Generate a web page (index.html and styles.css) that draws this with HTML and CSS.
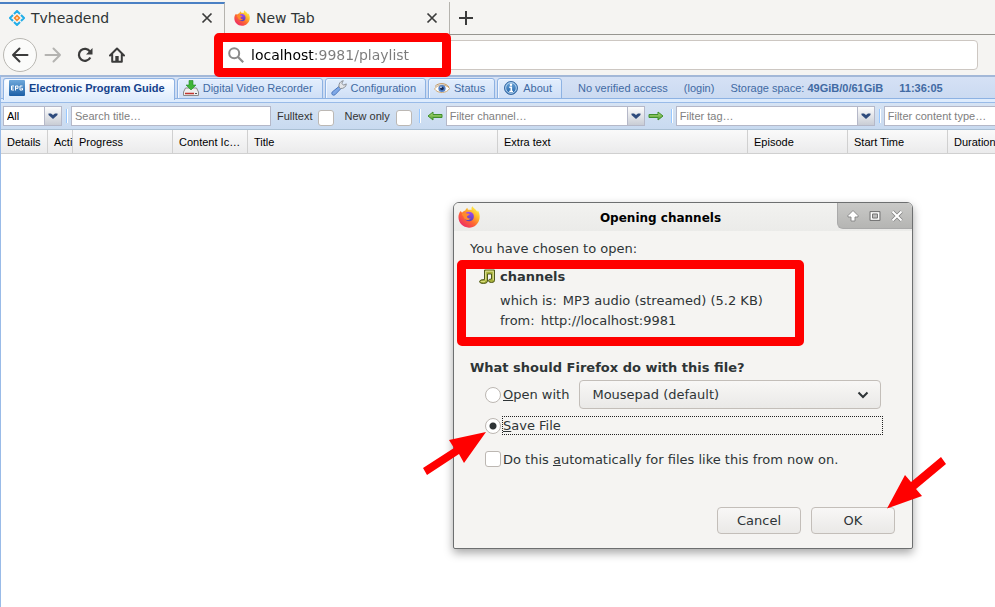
FILE: index.html
```html
<!DOCTYPE html>
<html lang="en">
<head>
<meta charset="utf-8">
<title>Tvheadend</title>
<link rel="stylesheet" href="styles.css">
</head>
<body>
<svg width="0" height="0" class="defs" aria-hidden="true">
  <defs>
    <linearGradient id="flame" x1="0.85" y1="0.1" x2="0.2" y2="0.9">
      <stop offset="0" stop-color="#fff04a"/><stop offset="0.3" stop-color="#ffb62a"/><stop offset="0.6" stop-color="#ff6a30"/><stop offset="1" stop-color="#ee2f62"/>
    </linearGradient>
    <linearGradient id="globe" x1="0" y1="0" x2="0" y2="1">
      <stop offset="0" stop-color="#a04df0"/><stop offset="1" stop-color="#5a3fb8"/>
    </linearGradient>
    <linearGradient id="green" x1="0" y1="0" x2="0" y2="1">
      <stop offset="0" stop-color="#b4e07c"/><stop offset="1" stop-color="#4d9a2e"/>
    </linearGradient>
    <linearGradient id="blue" x1="0" y1="0" x2="0" y2="1">
      <stop offset="0" stop-color="#6fa9dc"/><stop offset="1" stop-color="#1d5fa6"/>
    </linearGradient>
    <symbol id="firefox" viewBox="0 0 24 24">
      <path fill="url(#flame)" d="M3 5.500 4.400 7.300C5.600 5.900 7 5.200 8 5 8.500 3.600 9.300 2.500 10.500 2 10.200 3 10.600 3.800 11.400 4.200L15 4.200C14.400 2.500 14.800 1.200 15.700.3 16.500 2.300 19.500 3.600 21 6.300 21.600 5.900 21.700 5.300 21.600 4.700 23.200 7 24 10.200 23.600 13 22.800 19.300 18 23.600 12 23.600 5.500 23.600.5 18.600.5 12.400.5 9.800 1.300 7.300 3 5.500Z"/>
      <path fill="url(#globe)" d="M9 7C11 5.500 15 6 16.500 8.500 18.500 12 16.500 16.500 12.500 16.700 9 16.800 7 14.500 7 12.500L8 8.500Z"/>
      <path fill="#ff8a2c" d="M4.400 8.200C6 7.200 8.200 7.300 9.800 8.200 11 8.100 12.300 8.400 12.800 9.200 12 10.300 10.300 10.300 9.800 11.300 9.600 13 11.500 14 13.800 13.300 13 15.200 9.500 16.200 7.300 14.200 5.800 12.500 6.200 10.500 4.400 10Z"/>
    </symbol>
    <symbol id="close" viewBox="0 0 12 12"><path d="M1.500 1.500 10.500 10.500M10.500 1.500 1.500 10.500" fill="none" stroke="#3b3b3b" stroke-width="1.700"/></symbol>
    <symbol id="right" viewBox="0 0 16 10"><path d="M1 3.500H10V1L15 5 10 9V6.500H1Z" fill="url(#green)" stroke="#3f8f2c"/></symbol>
    <symbol id="drop" viewBox="0 0 10 6"><path d="M.5.500H3L5 2 7 .5H9.500V2L5 6 .5 2Z" fill="#2d4a7c"/></symbol>
  </defs>
</svg>

<header class="browser">
  <div class="tabstrip">
    <div class="tab current">
      <svg class="favicon" viewBox="0 0 16 16"><g fill="none" stroke="#23aee8" stroke-width="2"><path d="M5 4 8 1 11 4M12 5 15 8 12 11M11 12 8 15 5 12M4 11 1 8 4 5"/></g><path d="M8 4.500 11.500 8 8 11.500 4.500 8Z" fill="#f58220"/><path d="M8 6.500 9.500 8 8 9.500 6.500 8Z" fill="#ffd9b5"/></svg>
      <span class="tab-title">Tvheadend</span>
      <button class="plain" aria-label="Close tab"><svg class="x"><use href="#close"/></svg></button>
    </div>
    <div class="tab">
      <svg class="favicon"><use href="#firefox"/></svg>
      <span class="tab-title">New Tab</span>
      <button class="plain" aria-label="Close tab"><svg class="x"><use href="#close"/></svg></button>
    </div>
    <button class="plain new-tab" aria-label="Open a new tab"><svg width="14" height="14" viewBox="0 0 14 14"><path d="M7 0V14M0 7H14" stroke="#3b3b3b" stroke-width="2"/></svg></button>
  </div>
  <div class="navbar">
    <button class="plain back" aria-label="Back"><svg width="18" height="16" viewBox="0 0 18 16"><path d="M16.500 8H2M8.500 1.500 2 8 8.500 14.500" fill="none" stroke="#3b3b3b" stroke-width="2" stroke-linecap="round" stroke-linejoin="round"/></svg></button>
    <button class="plain nav" aria-label="Forward"><svg width="18" height="16" viewBox="0 0 18 16"><path d="M1.500 8H16M9.500 1.500 16 8 9.500 14.500" fill="none" stroke="#b4b3b1" stroke-width="2" stroke-linecap="round" stroke-linejoin="round"/></svg></button>
    <button class="plain nav" aria-label="Reload"><svg width="16" height="16" viewBox="0 0 16 16"><path d="M13.300 10.500A6 6 0 1 1 13 4.600" fill="none" stroke="#3b3b3b" stroke-width="2.200"/><path d="M15.500 1V7.500H9Z" fill="#3b3b3b"/></svg></button>
    <button class="plain nav" aria-label="Home"><svg width="16" height="16" viewBox="0 0 16 16"><path d="M1 8.500 8 1.500 15 8.500M3.200 7.500V14.800H12.800V7.500" fill="none" stroke="#3b3b3b" stroke-width="2" stroke-linecap="round" stroke-linejoin="round"/><path d="M6.300 14.500V9H9.700V14.500Z" fill="#3b3b3b"/></svg></button>
    <div class="urlbar">
      <svg width="16" height="16" viewBox="0 0 16 16"><circle cx="6.200" cy="6.200" r="5" fill="none" stroke="#8b8b8b" stroke-width="2"/><path d="M10 10 15.200 15.200" stroke="#8b8b8b" stroke-width="2.200"/></svg>
      <input type="text" value="localhost:9981/playlist" aria-label="Address">
    </div>
  </div>
</header>

<main class="app">
  <nav class="app-tabs">
    <a href="#epg" class="app-tab on"><svg width="16" height="16" viewBox="0 0 16 16"><rect width="16" height="16" rx="1" fill="url(#blue)"/><path d="M5 6H2.500V10H5M2.500 8H4.500M6.500 10.500V6H9V8.300H6.500M13.500 6H11V10H13.500V8.300H12.300" fill="none" stroke="#fff"/></svg>Electronic Program Guide</a>
    <a href="#dvr" class="app-tab"><svg width="16" height="16" viewBox="0 0 16 16"><path d="M2.500 8H13.500L15.500 12V15.500H.5V12Z" fill="#eee" stroke="#8a8a8a"/><path d="M2 13.500H11" stroke="#c3352e" stroke-width="1.500"/><path d="M12 13.500H14" stroke="#555"/><path d="M6 .5H10V5H13L8 10 3 5H6Z" fill="#3fb637" stroke="#24892a" stroke-width=".6"/></svg>Digital Video Recorder</a>
    <a href="#config" class="app-tab"><svg width="16" height="16" viewBox="0 0 16 16"><path d="M8 6.500 10 8.500 4 14.800Q2.500 15.700 1.200 14.600.3 13.500 1.200 12Z" fill="#7fa8e6" stroke="#4d78bd"/><path d="M8 7C7.500 4 9 1.200 12.300.7L10.800 3.200 12.500 5.200 15.300 3.900C15.200 6.800 12.500 8.800 9.500 8.500Z" fill="#e4e6e9" stroke="#8c9097"/></svg>Configuration</a>
    <a href="#status" class="app-tab"><svg width="16" height="16" viewBox="0 0 16 16"><path d="M.5 9C3 4.500 12 3.500 15.500 8.500 13 13.500 4 14 .5 9Z" fill="#fff" stroke="#d1ac78"/><path d="M1 6.500C4 2.500 12 2.500 15 7.200" fill="none" stroke="#c99b62"/><circle cx="8" cy="8.500" r="3.600" fill="#527fc5"/><circle cx="8" cy="8.500" r="1.800" fill="#172c56"/><circle cx="7" cy="7.200" r=".8" fill="#fff"/></svg>Status</a>
    <a href="#about" class="app-tab"><svg width="16" height="16" viewBox="0 0 16 16"><circle cx="8" cy="8" r="6.500" fill="url(#blue)" stroke="#3c6da6"/><circle cx="8" cy="8" r="5.300" fill="none" stroke="#b8d4ee"/><circle cx="8" cy="4.800" r="1.200" fill="#fff"/><path d="M6.300 7.300H8.300V11.500M6.300 11.500H10" fill="none" stroke="#fff" stroke-width="1.600"/></svg>About</a>
    <span class="info">No verified access</span>
    <a href="#login" class="info">(login)</a>
    <span class="info">Storage space: <b>49GiB/0/61GiB</b></span>
    <b class="info">11:36:05</b>
  </nav>

  <div class="filters">
    <label class="combo mode"><select aria-label="Mode"><option>All</option></select><span class="trigger"><svg><use href="#drop"/></svg></span></label>
    <i class="sep"></i>
    <input class="field search" type="text" placeholder="Search title…" aria-label="Search title">
    <label class="check">Fulltext<input type="checkbox"></label>
    <label class="check">New only<input type="checkbox"></label>
    <i class="sep"></i>
    <button class="plain step previous" aria-label="Previous channel"><svg><use href="#right"/></svg></button>
    <div class="combo"><input class="field" type="text" placeholder="Filter channel…" aria-label="Filter channel"><button class="trigger" aria-label="Show channels"><svg><use href="#drop"/></svg></button></div>
    <button class="plain step" aria-label="Next channel"><svg><use href="#right"/></svg></button>
    <i class="sep"></i>
    <div class="combo"><input class="field" type="text" placeholder="Filter tag…" aria-label="Filter tag"><button class="trigger" aria-label="Show tags"><svg><use href="#drop"/></svg></button></div>
    <i class="sep"></i>
    <div class="combo"><input class="field" type="text" placeholder="Filter content type…" aria-label="Filter content type"><button class="trigger" aria-label="Show content types"><svg><use href="#drop"/></svg></button></div>
  </div>

  <table class="grid">
    <colgroup><col class="w47"><col class="w25"><col class="w100"><col class="w75"><col class="w250"><col class="w250"><col class="w100"><col class="w100"><col class="w100"></colgroup>
    <thead><tr><th>Details</th><th>Acti</th><th>Progress</th><th>Content Ic…</th><th>Title</th><th>Extra text</th><th>Episode</th><th>Start Time</th><th>Duration</th></tr></thead>
  </table>
</main>

<section class="dialog" role="dialog" aria-labelledby="dialog-title">
  <header class="titlebar">
    <svg class="logo"><use href="#firefox"/></svg>
    <h1 id="dialog-title">Opening channels</h1>
    <div class="window-buttons">
      <button class="plain" aria-label="Shade"><svg width="12" height="12" viewBox="0 0 12 12"><path d="M6 .5 11 5.500V7H8V11H4V7H1V5.500Z" fill="#fff" stroke="#858585" stroke-width=".9"/></svg></button>
      <button class="plain" aria-label="Maximize"><svg width="12" height="12" viewBox="0 0 12 12"><path d="M1 1.500H11V10.500H1Z" fill="#aaa" stroke="#777" stroke-width="1"/><path d="M2.500 3H9.500V9H2.500Z" fill="#bbb" stroke="#fff" stroke-width="1.500"/><path d="M3.500 4H8.500V8H3.500Z" fill="none" stroke="#777"/></svg></button>
      <button class="plain" aria-label="Close"><svg width="12" height="12" viewBox="0 0 12 12"><path d="M1.500 1.500 10.500 10.500M10.500 1.500 1.500 10.500" stroke="#858585" stroke-width="3.600"/><path d="M1.500 1.500 10.500 10.500M10.500 1.500 1.500 10.500" stroke="#fff" stroke-width="2"/></svg></button>
    </div>
  </header>
  <form class="dialog-body">
    <p class="intro">You have chosen to open:</p>
    <div class="file">
      <svg width="16" height="16" viewBox="0 0 16 16"><path fill-rule="evenodd" d="M5.500 1H15.500V11.500Q15.500 13.500 12.500 13.500 9.500 13.500 9.500 11.500 9.500 10 12.500 10V5H8.500V12Q8.500 14.500 4.500 14.500.5 14.500.5 12.500.5 10.500 5.500 10.500Z" fill="#a9b23a" stroke="#4f581c"/><path d="M6.700 11.500V2.200H14.300V11" fill="none" stroke="#dfe39a"/><path d="M2 12.500H6" stroke="#d8dc80"/></svg>
      <div>
        <strong>channels</strong>
        <p class="detail first"><span>which is:</span> <span>MP3 audio (streamed) (5.2 KB)</span></p>
        <p class="detail"><span>from:</span> <span>http://localhost:9981</span></p>
      </div>
    </div>
    <h2>What should Firefox do with this file?</h2>
    <div class="choice open">
      <input type="radio" name="action" id="open"><label for="open"><u>O</u>pen with</label>
      <div class="picker"><select aria-label="Application"><option>Mousepad (default)</option></select><svg width="12" height="8" viewBox="0 0 12 8"><path d="M1.500 1.500 6 6 10.500 1.500" fill="none" stroke="#2e3436" stroke-width="2"/></svg></div>
    </div>
    <div class="choice save">
      <input type="radio" name="action" id="save" checked><label for="save" class="focused"><u>S</u>ave File</label>
    </div>
    <div class="choice always">
      <input type="checkbox" id="always"><label for="always">Do this <u>a</u>utomatically for files like this from now on.</label>
    </div>
    <div class="buttons"><button type="button">Cancel</button><button type="button">OK</button></div>
  </form>
</section>

<div class="mark mark-url"></div>
<div class="mark mark-file"></div>
<svg class="arrow arrow-save" viewBox="0 0 64 46" aria-hidden="true"><path fill="#f00" d="M63 1 26 9 31 17 0 37 4 44 36 23 41 32Z"/></svg>
<svg class="arrow arrow-ok" viewBox="0 0 62 54" aria-hidden="true"><path fill="#f00" d="M1 51.500 19 18 25 25 55 0 60 7 30 32 36 39Z"/></svg>
</body>
</html>
```
FILE: styles.css
```css
* { box-sizing: border-box; }

body {
  margin: 0;
  min-height: 100vh;
  display: flex;
  flex-direction: column;
  overflow: hidden;
  background: #fff;
  font-family: "DejaVu Sans", sans-serif;
  font-size: 13px;
  color: #2e3436;
}

h1, h2, p { margin: 0; }
svg { display: block; flex: none; }
.defs { position: absolute; }
button, input, select { font: inherit; color: inherit; margin: 0; }
a { color: inherit; text-decoration: none; }

.plain {
  display: flex;
  align-items: center;
  justify-content: center;
  padding: 0;
  border: 0;
  background: none;
}

/* Browser chrome */
.browser { background: #f5f4f2; }

.tabstrip { display: flex; height: 35px; padding-top: 2px; }
.tabstrip::after { content: ""; flex: 1; border-bottom: 1px solid #969590; }
.tab {
  display: flex;
  align-items: center;
  gap: 6px;
  width: 225px;
  padding: 0 11px 0 9px;
  border-right: 1px solid #b5b3ae;
  border-bottom: 1px solid #969590;
  font-size: 14px;
}
.tab.current { padding-bottom: 3px; border-top: 2px solid #4a80c4; border-bottom: 0; }
.tab-title { flex: 1; }
.favicon { width: 16px; height: 16px; }
.x { width: 12px; height: 12px; }
.new-tab { width: 32px; border-bottom: 1px solid #969590; }

.navbar { display: flex; align-items: center; height: 40px; padding: 0 17px 0 3px; }
.back { width: 34px; height: 34px; border: 1px solid #b9b7b2; border-radius: 50%; background: #fbfbfa; }
.nav { width: 32px; height: 32px; }
.urlbar {
  flex: 1;
  display: flex;
  align-items: center;
  gap: 7px;
  height: 30px;
  margin-left: 88px;
  padding: 0 6px;
  border: 1px solid #cdc7c2;
  border-radius: 4px;
  background: #fff;
}
.urlbar input {
  flex: 1;
  padding: 0;
  border: 0;
  outline: 0;
  font-size: 14px;
  color: transparent;
  background: linear-gradient(90deg, #000 64px, #7b7b7b 64px);
  background-clip: text;
  -webkit-background-clip: text;
}

/* Tvheadend page */
.app {
  flex: 1;
  min-width: 0;
  overflow: hidden;
  border-left: 1px solid #99bbe8;
  font-family: "Liberation Sans", Arial, sans-serif;
  font-size: 11px;
}

.app-tabs {
  display: flex;
  gap: 2px;
  height: 28px;
  padding: 1px 2px 4px;
  border-top: 2px solid #a3b8d8;
  border-bottom: 1px solid #99bbe8;
  background: linear-gradient(#d5e1f5, #cbdaf1 21px, #8db2e3 21px, #8db2e3 22px, #deecfd 22px);
  color: #416aa3;
  white-space: nowrap;
}
.app-tab {
  display: flex;
  align-items: center;
  gap: 4px;
  height: 21px;
  padding: 0 9px 1px 5px;
  border: 1px solid #8db2e3;
  border-radius: 3px 3px 0 0;
  background: linear-gradient(#e3eefd, #cfdff6);
  box-shadow: inset 1px 1px #f0f6ff;
}
.app-tab.on {
  height: 22px;
  padding-bottom: 3px;
  border-bottom: 0;
  background: linear-gradient(#fff, #deecfd);
  color: #15428b;
  font-weight: bold;
}
.info { padding-top: 4px; margin-left: 14px; }

.filters {
  display: flex;
  align-items: center;
  height: 27px;
  padding-left: 2px;
  border-bottom: 1px solid #a9bfd3;
  background: linear-gradient(#d6e3f3, #c8daf0);
  color: #333;
  overflow: hidden;
}
.filters > * { flex: none; }
.field {
  min-width: 0;
  height: 20px;
  padding: 0 3px;
  border: 1px solid #b5b8c8;
  outline: 0;
  background: #fff;
}
.field::placeholder { color: #808080; opacity: 1; }
.search { width: 200px; }
.combo { display: flex; width: 199px; }
.combo .field, .combo select { flex: 1; }
.combo select {
  min-width: 0;
  height: 20px;
  padding: 0 3px;
  border: 1px solid #b5b8c8;
  appearance: none;
  background: #fff;
  color: #000;
}
.combo.mode { width: 59px; }
.trigger {
  display: flex;
  align-items: center;
  justify-content: center;
  width: 17px;
  height: 20px;
  padding: 0;
  border: 1px solid #b5b8c8;
  border-left: 0;
  background: linear-gradient(#fdfdfd, #c9cdd5);
}
.trigger svg { width: 10px; height: 6px; }
.sep { width: 2px; height: 14px; margin: 0 3px 0 4px; border-left: 1px solid #98c8ff; border-right: 1px solid #fff; }
.check { display: flex; align-items: center; gap: 6px; margin: 0 4px 0 6px; }
.check input {
  appearance: none;
  width: 16px;
  height: 16px;
  margin-top: 4px;
  border: 1px solid #bcb8b4;
  border-radius: 3px;
  background: #fff;
}
.check + .sep { margin-left: 3px; }
.step { width: 22px; height: 20px; }
.step svg { width: 16px; height: 10px; }
.previous { transform: scaleX(-1); }

.grid { width: 1047px; table-layout: fixed; border-collapse: separate; border-spacing: 0; }
.grid th {
  height: 24px;
  padding: 0 0 0 6px;
  border-right: 1px solid #d0d0d0;
  border-bottom: 1px solid #d0d0d0;
  background: linear-gradient(#fafafa, #ebebec);
  color: #000;
  font-weight: normal;
  text-align: left;
  white-space: nowrap;
}
.w25 { width: 25px; }
.w47 { width: 47px; }
.w75 { width: 75px; }
.w100 { width: 100px; }
.w250 { width: 250px; }

/* Download dialog */
.dialog {
  position: absolute;
  left: 453px;
  top: 202px;
  width: 460px;
  border: 1px solid #6d6f70;
  border-radius: 6px 6px 2px 2px;
  background: #f5f4f2;
  box-shadow: 0 4px 10px rgba(0, 0, 0, .35);
}
.titlebar {
  display: flex;
  align-items: center;
  height: 28px;
  padding-left: 4px;
  border-radius: 5px 5px 0 0;
  background: linear-gradient(#f2f2f0, #ebebe9);
  overflow: hidden;
}
.logo { width: 22px; height: 22px; }
.titlebar h1 { flex: 1; padding: 1px 0 0 4px; font-size: 12px; text-align: center; color: #000; }
.window-buttons {
  display: flex;
  align-self: flex-start;
  gap: 10px;
  height: 26px;
  padding: 0 9px;
  border-left: 1px solid #aaa;
  border-bottom: 1px solid #aaa;
  border-bottom-left-radius: 6px;
  background: linear-gradient(#c9c9c7, #b5b5b3);
}
.dialog-body { padding: 10px 17px 14px 16px; }
.dialog-body p { line-height: 16px; }
.file { display: flex; gap: 5px; padding: 12px 0 0 9px; }
.file strong { display: block; line-height: 16px; }
.detail { display: flex; gap: 6px; margin-top: 4px; }
.detail.first { margin-top: 8px; }
h2 { margin-top: 31px; font-size: 13px; line-height: 16px; }

.choice { display: flex; align-items: center; padding-left: 15px; gap: 2px; }
.choice input {
  appearance: none;
  flex: none;
  width: 16px;
  height: 16px;
  border: 1px solid #bcb7b2;
  border-radius: 3px;
  background: #fff;
}
.choice input[type="radio"] { border-radius: 50%; }
.choice input:checked { background: radial-gradient(circle, #2e3436 3px, #fff 4px); }
.open { margin-top: 4px; }
.save { margin-top: 8px; padding-right: 13px; }
.always { margin-top: 17px; }
.focused { flex: 1; height: 17px; line-height: 17px; outline: 1px dotted #222; }
.picker { display: flex; align-items: center; flex: 1; margin: 0 14px 0 8px; }
.picker select {
  flex: 1;
  height: 29px;
  padding: 0 12px;
  border: 1px solid #c3beb9;
  border-radius: 4px;
  appearance: none;
  background: linear-gradient(#f8f7f6, #eae9e7);
}
.picker svg { margin-left: -24px; margin-right: 12px; pointer-events: none; }
.buttons { display: flex; justify-content: flex-end; gap: 10px; margin-top: 40px; }
.buttons button {
  width: 84px;
  height: 27px;
  padding: 0;
  border: 1px solid #c3beb9;
  border-radius: 4px;
  background: linear-gradient(#f8f7f6, #eae9e7);
}

/* Callouts drawn over the window */
.mark { position: absolute; border: 9px solid #f00; border-radius: 5px; pointer-events: none; }
.mark-url { left: 214px; top: 33px; width: 237px; height: 44px; }
.mark-file { left: 457px; top: 260px; width: 347px; height: 86px; }
.arrow { position: absolute; pointer-events: none; }
.arrow-save { left: 423px; top: 431px; width: 64px; height: 46px; }
.arrow-ok { left: 886px; top: 457px; width: 62px; height: 54px; }
```
